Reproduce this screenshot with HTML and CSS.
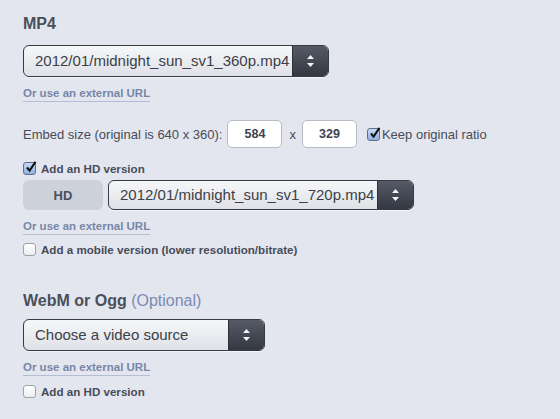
FILE: index.html
```html
<!DOCTYPE html>
<html>
<head>
<meta charset="utf-8">
<link rel="stylesheet" href="styles.css">
</head>
<body>
<div class="panel">
  <section class="group">
    <h2 class="heading">MP4</h2>
    <div class="select wide">
      <span class="select-text">2012/01/midnight_sun_sv1_360p.mp4</span>
      <span class="select-btn"><svg width="9" height="14" viewBox="0 0 9 14"><path d="M4.5 1 L8 5 H1 Z M4.5 13 L8 9 H1 Z" fill="#f4f5f8"/></svg></span>
    </div>
    <a class="ext-link">Or use an external URL</a>
    <div class="embed-row">
      <span class="embed-label">Embed size (original is 640 x 360):</span>
      <span class="num-box">584</span>
      <span class="times">x</span>
      <span class="num-box">329</span>
      <span class="check checked small"><svg width="13" height="13" viewBox="0 0 13 13"><path d="M3 6.5 L5.6 9.6 L11.5 0.8" fill="none" stroke="#111" stroke-width="2.1"/></svg></span>
      <span class="ratio-label">Keep original ratio</span>
    </div>
    <label class="check-row hd-check">
      <span class="check checked"><svg width="13" height="13" viewBox="0 0 13 13"><path d="M3 6.5 L5.6 9.6 L11.5 0.8" fill="none" stroke="#111" stroke-width="2.1"/></svg></span>
      <span class="check-label">Add an HD version</span>
    </label>
    <div class="hd-row">
      <span class="hd-tag">HD</span>
      <div class="select wide">
        <span class="select-text">2012/01/midnight_sun_sv1_720p.mp4</span>
        <span class="select-btn"><svg width="9" height="14" viewBox="0 0 9 14"><path d="M4.5 1 L8 5 H1 Z M4.5 13 L8 9 H1 Z" fill="#f4f5f8"/></svg></span>
      </div>
    </div>
    <a class="ext-link">Or use an external URL</a>
    <label class="check-row mobile-check">
      <span class="check"></span>
      <span class="check-label">Add a mobile version (lower resolution/bitrate)</span>
    </label>
  </section>
  <section class="group second">
    <h2 class="heading">WebM or Ogg <span class="optional">(Optional)</span></h2>
    <div class="select narrow">
      <span class="select-text">Choose a video source</span>
      <span class="select-btn"><svg width="9" height="14" viewBox="0 0 9 14"><path d="M4.5 1 L8 5 H1 Z M4.5 13 L8 9 H1 Z" fill="#f4f5f8"/></svg></span>
    </div>
    <a class="ext-link">Or use an external URL</a>
    <label class="check-row last-check">
      <span class="check"></span>
      <span class="check-label">Add an HD version</span>
    </label>
  </section>
</div>
</body>
</html>
```
FILE: styles.css
```css
html, body {
  margin: 0;
  padding: 0;
}
body {
  background: #e3e6ef;
  font-family: "Liberation Sans", Arial, sans-serif;
  color: #474c58;
  width: 560px;
  height: 419px;
  overflow: hidden;
}
.panel {
  padding: 14px 0 0 23px;
}
.group {
  display: flex;
  flex-direction: column;
  align-items: flex-start;
}
.heading {
  margin: 0;
  font-size: 16px;
  line-height: 20px;
  font-weight: bold;
  color: #4a4f5b;
}
.optional {
  font-weight: normal;
  color: #7b8bb2;
}
.select {
  margin-top: 11px;
  display: flex;
  height: 32px;
  box-sizing: border-box;
  border: 1px solid #363a45;
  border-radius: 6px;
  background: linear-gradient(#f6f7f9, #dfe1e7);
  overflow: hidden;
  box-shadow: 0 1px 0 rgba(255,255,255,0.6);
}
.select.wide { width: 306px; }
.select.narrow { width: 242px; margin-top: 8px; }
.select-text {
  flex: 1;
  font-size: 15px;
  line-height: 30px;
  padding-left: 11px;
  color: #3b3f48;
  white-space: nowrap;
}
.select-btn {
  width: 35px;
  display: flex;
  align-items: center;
  justify-content: center;
  background: linear-gradient(#555a66, #343843);
  border-left: 1px solid #2c303a;
}
.ext-link {
  margin-top: 10px;
  font-size: 11.5px;
  font-weight: bold;
  line-height: 13px;
  color: #7886a6;
  border-bottom: 1px solid #b3bdd4;
  padding-bottom: 1px;
}
.embed-row {
  margin-top: 18px;
  display: flex;
  align-items: center;
  font-size: 13px;
}
.embed-label { margin-right: 5px; }
.num-box {
  width: 55px;
  height: 28px;
  box-sizing: border-box;
  border: 1px solid #b7bcc7;
  border-radius: 5px;
  background: #fff;
  font-weight: bold;
  font-size: 12.5px;
  color: #3e4350;
  display: flex;
  align-items: center;
  justify-content: center;
}
.times { margin: 0 6px 0 7px; }
.check {
  width: 13px;
  height: 13px;
  box-sizing: border-box;
  border: 1px solid #9da2ad;
  border-radius: 3px;
  background: linear-gradient(#fff, #eceef2);
  display: inline-flex;
  flex: none;
  position: relative;
}
.check.checked {
  background: linear-gradient(#c7d9f2, #8fb0df);
  border-color: #5c6f93;
}
.check svg {
  position: absolute;
  left: 0;
  top: -2px;
}
.check.small { margin-left: 10px; margin-right: 2px; }
.ratio-label { font-size: 13px; }
.check-row {
  display: flex;
  align-items: center;
  gap: 5px;
}
.check-label {
  font-size: 11.6px;
  font-weight: bold;
  color: #474c58;
}
.hd-check { margin-top: 14px; }
.hd-row {
  margin-top: 5px;
  display: flex;
  gap: 5px;
}
.hd-row .select { margin-top: 0; height: 30px; }
.hd-row .select-text { line-height: 28px; }
.hd-tag {
  width: 80px;
  height: 30px;
  border-radius: 6px;
  background: #cdd1da;
  font-weight: bold;
  font-size: 13px;
  color: #4a505e;
  display: flex;
  align-items: center;
  justify-content: center;
}
.mobile-check { margin-top: 8px; }
.second { margin-top: 35px; }
.last-check { margin-top: 9px; }
```
